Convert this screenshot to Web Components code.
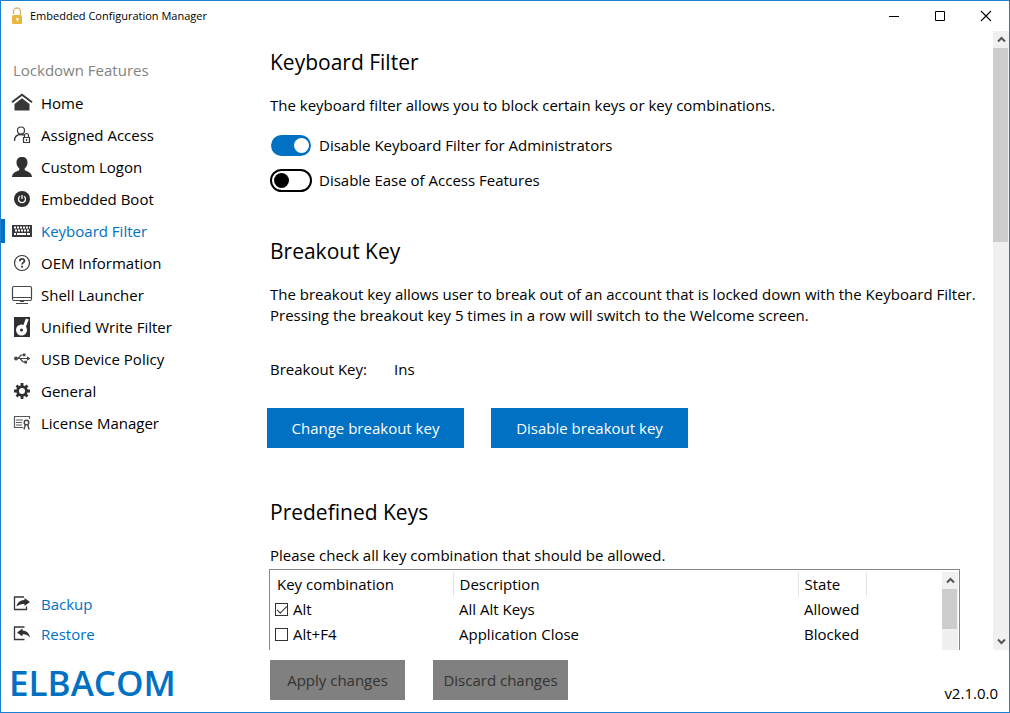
<!DOCTYPE html>
<html lang="en">
<head>
<meta charset="utf-8">
<title>Embedded Configuration Manager</title>
<style>
html, body { margin: 0; height: 100%; }
body { font-family: "Open Sans", "Noto Sans", sans-serif; font-size: 15px; line-height: 21px; color: #000; background: #fff; }
</style>
</head>
<body>
<ecm-window>
  <ecm-titlebar slot="title">Embedded Configuration Manager</ecm-titlebar>
  <ecm-sidebar slot="side"></ecm-sidebar>
  <ecm-keyboard-filter slot="page"></ecm-keyboard-filter>
  <ecm-footer slot="footer"></ecm-footer>
</ecm-window>
<script>
const define = (name, html, setup) => {
  customElements.define(name, class extends HTMLElement {
    constructor() {
      super();
      const root = this.attachShadow({ mode: 'open' });
      root.innerHTML = '<style>*{box-sizing:border-box}:host{display:block;box-sizing:border-box}</style>' + html;
    }
    connectedCallback() { if (setup) setup(this, this.shadowRoot); }
  });
};

const icons = {
  home: '<path d="M1 10.200 11 2.800l10 7.400" fill="none" stroke="#38383a" stroke-width="2"/><path d="M3.500 12 11 6.300l7.500 5.700V18.500h-15z" fill="#38383a"/>',
  assigned: '<g fill="none" stroke="#38383a"><circle cx="10" cy="6.500" r="3.500" stroke-width="1.200"/><path d="M3.500 17c0-4 2.500-6.500 6.500-6.500 1.200 0 2.200.2 3 .8" stroke-width="1.300"/><path d="M12.500 13.500h6v5h-6zM13.500 13.500v-2a2 2 0 0 1 4 0v2M15.500 15v2" stroke-width="1.200"/></g>',
  user: '<path d="M11 1c3.500 0 5.500 2 5.500 5.500 0 2.800-1.100 4.600-2.800 6v1.500c0 1 7.300 1.500 7.300 7H1c0-5.500 7.300-6 7.300-7v-1.500c-1.700-1.400-2.800-3.200-2.800-6C5.500 3 7.500 1 11 1z" fill="#303032"/>',
  boot: '<circle cx="11" cy="11" r="8" fill="#303032"/><path d="M9 8.300a3.500 3.500 0 1 0 4 0M11 7v4" fill="none" stroke="#fff" stroke-width="1.300"/>',
  keyboard: '<path d="M1 5h20v12H1z" fill="#38383a"/><path d="M3 7.500h16M4 10.500h15" stroke="#fff" stroke-width="2" stroke-dasharray="2 1"/><path d="M3 14h2M6 14h9M16 14h3" stroke="#fff" stroke-width="2"/>',
  help: '<circle cx="11" cy="11" r="7.500" fill="none" stroke="#38383a" stroke-width="1.200"/><path d="M8.800 9.200c0-3 4.600-3 4.600-.3 0 1.700-2.300 1.700-2.300 3.500" fill="none" stroke="#38383a" stroke-width="1.800"/><path d="M10.100 13.800h2v1.800h-2z" fill="#38383a"/>',
  shell: '<rect x="1.500" y="2.500" width="19" height="14" rx="1.500" fill="none" stroke="#48484a" stroke-width="1.200"/><path d="M1.500 13.500h19M5 19.500h12M9 17.500h4" stroke="#48484a" stroke-width="1.200"/>',
  disk: '<path d="M3 1h16v20H3z" fill="#303032"/><circle cx="10.500" cy="14" r="5.500" fill="#fff"/><path d="M16.300 3 12 14" stroke="#fff" stroke-width="3"/><circle cx="10.500" cy="14" r="1.500" fill="#303032"/><path d="M4.500 3.500h9l-1.800 4.500h-7z" fill="#303032"/>',
  usb: '<g fill="none" stroke="#48484a" stroke-width="1.200"><path d="M5 10.500h12M7 10.500 10 7h2.500M9 10.500l3 3.500h2"/></g><circle cx="5" cy="10.500" r="2" fill="#48484a"/><path d="M16 8.200 19.500 10.500 16 12.800zM12 5.500h2.500v2.800H12zM13.300 12.700h2.700v2.700h-2.700z" fill="#48484a"/>',
  gear: '<circle cx="11" cy="11" r="5.800" fill="#303032"/><path d="M11 3v16M3 11h16M5.500 5.500l11 11M16.500 5.500l-11 11" stroke="#303032" stroke-width="2.800"/><circle cx="11" cy="11" r="3" fill="#fff"/>',
  license: '<path d="M12 15.500H3.500v-11h15v2.500M5 8h7M5 10.500h6M5 13h6" fill="none" stroke="#58585a" stroke-width="1.200"/><circle cx="15.500" cy="10.500" r="2.300" fill="none" stroke="#48484a" stroke-width="1.400"/><path d="m14.300 12.500-1.300 5M16.700 12.500l1.300 5" stroke="#48484a" stroke-width="1.400"/>',
  backup: '<path d="M13 4H3.500v12.500h12v-3" fill="none" stroke="#38383a" stroke-width="1.300"/><path d="M13.500 5 19 9l-5.500 4v-2c-3-.3-5.500.5-8 2.500C6 10 9 7.200 13.500 7z" fill="#303032"/>',
  restore: '<path d="M13.500 4h-10v12.500h10" fill="none" stroke="#38383a" stroke-width="1.300"/><path d="M11.500 5.500 6 9.500l5.500 4v-2.200c3-.3 5 .5 7.500 3.200-.5-4-3.500-6.800-7.500-7z" fill="#303032"/>'
};

customElements.define('ecm-icon', class extends HTMLElement {
  static observedAttributes = ['name'];
  constructor() {
    super();
    this.attachShadow({ mode: 'open' }).innerHTML =
      '<style>:host{display:block;width:22px;height:22px;flex:none}svg{display:block}</style><svg width="22" height="22" viewBox="0 0 22 22" aria-hidden="true"></svg>';
  }
  attributeChangedCallback(attr, old, value) {
    this.shadowRoot.querySelector('svg').innerHTML = icons[value] || '';
  }
});

define('ecm-window', `<style>
:host{display:grid;grid-template:30px minmax(0,1fr) 62px / 266px minmax(0,1fr);height:100vh;border:1px solid #1a80d2}
slot{display:contents}
::slotted([slot=title]){grid-column:1 / 3}
::slotted([slot=side]){grid-row:2 / 4}
</style><slot name="title"></slot><slot name="side"></slot><slot name="page"></slot><slot name="footer"></slot>`);

define('ecm-titlebar', `<style>
:host{display:flex;align-items:center;font-size:11px;line-height:16px;padding-left:10px}
.lock{margin-right:6px;display:block}
span{flex:1}
button{width:46px;height:30px;border:0;padding:0;background:none;display:grid;place-items:center}
</style>
<svg class="lock" width="13" height="18" viewBox="0 0 13 18" aria-hidden="true"><path d="M2.500 7V4.500a3.500 3.500 0 0 1 7 0V8" fill="none" stroke="#d9bd77" stroke-width="1.500"/><rect x="1" y="8" width="10" height="9" rx="1.500" fill="#e8b73e"/><path d="M5 11h2.500v1.500l-1 2h-.5z" fill="#fff"/></svg>
<span><slot></slot></span>
<button aria-label="Minimize"><svg width="12" height="12"><path d="M1 6.500h10" stroke="#000"/></svg></button>
<button aria-label="Maximize"><svg width="12" height="12"><path d="M1.500 1.500h9v9h-9z" fill="none" stroke="#000"/></svg></button>
<button aria-label="Close"><svg width="12" height="12"><path d="m1 1 10 10M11 1 1 11" stroke="#000" stroke-width="1.100"/></svg></button>`);

define('ecm-nav-item', `<style>
a{display:flex;align-items:center;gap:8px;height:var(--row,32px);padding-left:10px;color:var(--link,#000);text-decoration:none;position:relative}
:host([current]) a{color:#0071c3}
:host([current]) a::before{content:"";position:absolute;left:0;top:4px;width:4px;height:24px;background:#0071c3}
</style><a href="#"><ecm-icon></ecm-icon><slot></slot></a>`,
  (el, root) => root.querySelector('ecm-icon').setAttribute('name', el.getAttribute('icon')));

define('ecm-sidebar', `<style>
:host{display:flex;flex-direction:column;padding-top:29px}
h2{margin:0 0 6px;padding-left:12px;font-weight:400;font-size:15px;line-height:21px;color:#838383}
nav.links{margin-top:auto;--row:30px;--link:#0071c3}
.logo{padding-left:8px;margin:8px 0 3px;font-weight:600;font-size:35px;line-height:52px;color:#0071c3}
</style>
<h2>Lockdown Features</h2>
<nav>
<ecm-nav-item icon="home">Home</ecm-nav-item>
<ecm-nav-item icon="assigned">Assigned Access</ecm-nav-item>
<ecm-nav-item icon="user">Custom Logon</ecm-nav-item>
<ecm-nav-item icon="boot">Embedded Boot</ecm-nav-item>
<ecm-nav-item icon="keyboard" current>Keyboard Filter</ecm-nav-item>
<ecm-nav-item icon="help">OEM Information</ecm-nav-item>
<ecm-nav-item icon="shell">Shell Launcher</ecm-nav-item>
<ecm-nav-item icon="disk">Unified Write Filter</ecm-nav-item>
<ecm-nav-item icon="usb">USB Device Policy</ecm-nav-item>
<ecm-nav-item icon="gear">General</ecm-nav-item>
<ecm-nav-item icon="license">License Manager</ecm-nav-item>
</nav>
<nav class="links">
<ecm-nav-item icon="backup">Backup</ecm-nav-item>
<ecm-nav-item icon="restore">Restore</ecm-nav-item>
</nav>
<div class="logo">ELBACOM</div>`);

define('ecm-toggle', `<style>
label{display:flex;align-items:center;gap:7px;height:35px}
input{appearance:none;margin:0;width:42px;height:23px;flex:none;border:2px solid #000;border-radius:12px;display:flex;align-items:center;padding:0 2px}
input::before{content:"";width:15px;height:15px;border-radius:50%;background:#000}
input:checked{border:1px solid transparent;background:#0071c3;background-clip:padding-box;justify-content:flex-end}
input:checked::before{background:#fff}
</style><label><input type="checkbox"><slot></slot></label>`,
  (el, root) => { root.querySelector('input').checked = el.hasAttribute('checked'); });

define('ecm-button', `<style>
button{display:block;width:100%;height:40px;border:0;padding:0;font:inherit;color:#fff;background:#0071c3}
button:disabled{color:#333;background:#808080}
</style><button><slot></slot></button>`,
  (el, root) => { root.querySelector('button').disabled = el.hasAttribute('disabled'); });

define('ecm-scrollbar', `<style>
:host{display:flex;flex-direction:column;background:#f0f0f0}
button{height:17px;border:0;padding:0;background:none;display:grid;place-items:center;flex:none}
.thumb{background:#cdcdcd;height:var(--thumb,40px);margin-right:1px}
.down{margin-top:auto}
:host([top-only]) .down{display:none}
</style>
<button aria-label="Scroll up"><svg width="9" height="7"><path d="m1 5.500 3.500-3.500L8 5.500" fill="none" stroke="#555" stroke-width="2"/></svg></button>
<div class="thumb"></div>
<button class="down" aria-label="Scroll down"><svg width="9" height="7"><path d="m1 1.500 3.500 3.500L8 1.500" fill="none" stroke="#555" stroke-width="2"/></svg></button>`);

define('ecm-key-table', `<style>
:host{display:flex;border:1px solid #828790;border-bottom:0;padding:2px 1px 0;overflow:hidden}
.rows{flex:1}
table{width:100%;border-collapse:collapse;table-layout:fixed}
th,td{height:25px;padding:0 0 0 6px;text-align:left;font-weight:400;line-height:21px}
th:not(:last-child){border-right:1px solid #e5e5e5}
td:first-child{padding-left:4px}
.k{width:182px}.s{width:68px}.e{width:76px}
label{display:flex;align-items:center;gap:5px}
input{appearance:none;margin:0;width:13px;height:13px;border:1px solid #333;display:grid;place-items:center}
input:checked::before{content:"";width:9px;height:4px;border:solid #333;border-width:0 0 1px 1px;rotate:-45deg;margin-bottom:3px}
ecm-scrollbar{width:16px;--thumb:40px}
</style>
<div class="rows"><table>
<colgroup><col class="k"><col><col class="s"><col class="e"></colgroup>
<thead><tr><th>Key combination</th><th>Description</th><th>State</th><th></th></tr></thead>
<tbody>
<tr><td><label><input type="checkbox" checked>Alt</label></td><td>All Alt Keys</td><td>Allowed</td><td></td></tr>
<tr><td><label><input type="checkbox">Alt+F4</label></td><td>Application Close</td><td>Blocked</td><td></td></tr>
</tbody></table></div>
<ecm-scrollbar top-only></ecm-scrollbar>`);

define('ecm-keyboard-filter', `<style>
:host{display:flex;min-height:0}
main{flex:1;min-width:0;display:flex;flex-direction:column;overflow:hidden;padding:15px 0 0 3px}
h1{margin:0;font-weight:400;font-size:21px;line-height:32px}
p{margin:17px 0 0}
.toggles{margin:12px 0 37px}
dl{display:flex;gap:27px;margin:33px 0 28px}
dt,dd{margin:0}
.actions{display:flex;gap:27px;margin:0 0 48px -3px}
.actions ecm-button{width:197px}
ecm-key-table{flex:1;margin:3px 33px 0 -1px}
.page{width:16px;--thumb:194px}
</style>
<main>
<h1>Keyboard Filter</h1>
<p>The keyboard filter allows you to block certain keys or key combinations.</p>
<div class="toggles">
<ecm-toggle checked>Disable Keyboard Filter for Administrators</ecm-toggle>
<ecm-toggle>Disable Ease of Access Features</ecm-toggle>
</div>
<h1>Breakout Key</h1>
<p>The breakout key allows user to break out of an account that is locked down with the Keyboard Filter.<br>Pressing the breakout key 5 times in a row will switch to the Welcome screen.</p>
<dl><dt>Breakout Key:</dt><dd>Ins</dd></dl>
<div class="actions"><ecm-button>Change breakout key</ecm-button><ecm-button>Disable breakout key</ecm-button></div>
<h1>Predefined Keys</h1>
<p>Please check all key combination that should be allowed.</p>
<ecm-key-table></ecm-key-table>
</main>
<ecm-scrollbar class="page"></ecm-scrollbar>`);

define('ecm-footer', `<style>
:host{display:flex;align-items:flex-start;gap:28px;padding:10px 11px 8px 3px}
ecm-button{width:135px}
span{margin-left:auto;align-self:flex-end}
</style>
<ecm-button disabled>Apply changes</ecm-button><ecm-button disabled>Discard changes</ecm-button><span>v2.1.0.0</span>`);
</script>
</body>
</html>
